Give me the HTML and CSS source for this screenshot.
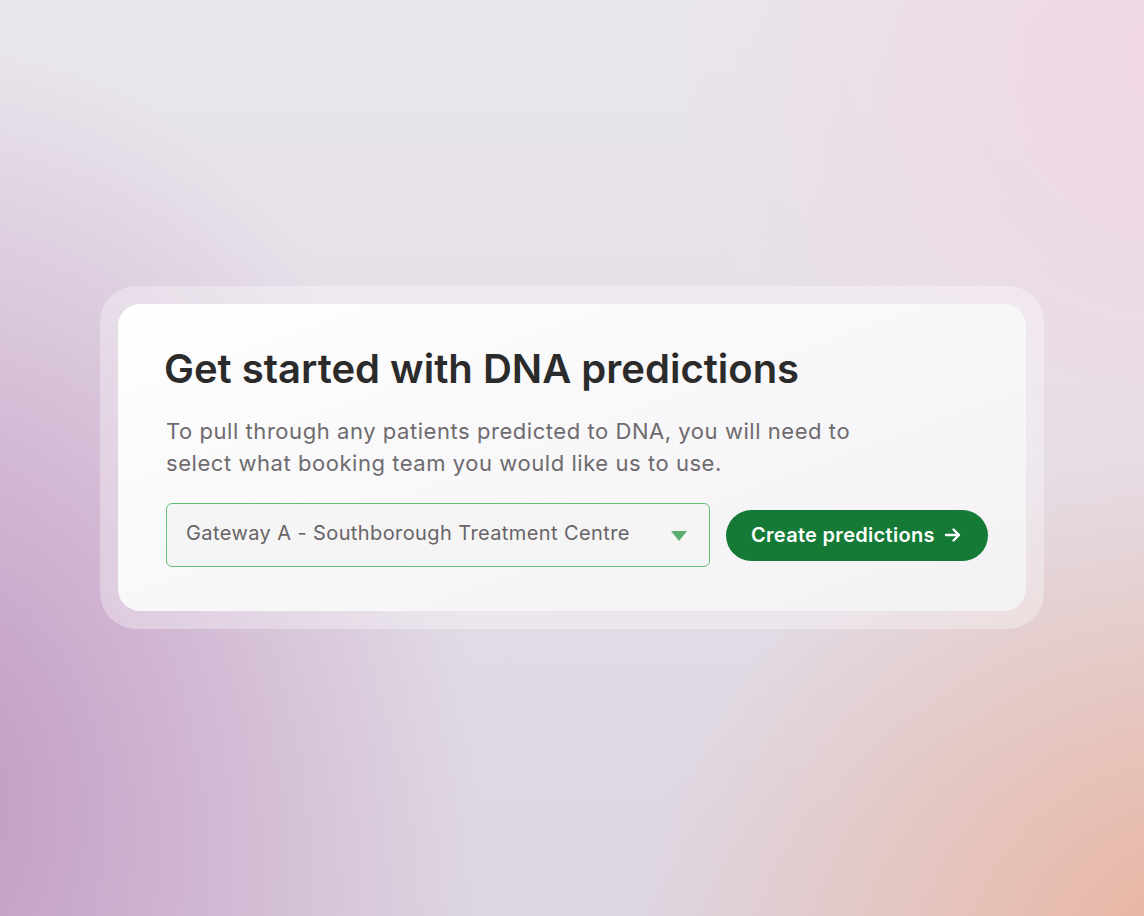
FILE: index.html
```html
<!DOCTYPE html>
<html lang="en">
<head>
<meta charset="utf-8">
<title>Get started with DNA predictions</title>
<link rel="stylesheet" href="styles.css">
</head>
<body>
<main class="stage">
  <div class="frame">
    <section class="card">
      <h1 class="title">Get started with DNA predictions</h1>
      <p class="lead">To pull through any patients predicted to DNA, you will need to select what booking team you would like us to use.</p>
      <div class="actions">
        <div class="select">
          <span class="select-value">Gateway A - Southborough Treatment Centre</span>
          <svg class="caret" width="16" height="11" viewBox="0 0 16 11" aria-hidden="true"><path d="M0 0 H16 L8 10 Z" fill="#5aae72"/></svg>
        </div>
        <button class="btn">Create predictions
          <svg class="arrow" width="18" height="16" viewBox="0 0 18 16" aria-hidden="true"><path d="M2 8 H15 M9.5 2.5 L15 8 L9.5 13.5" fill="none" stroke="#fff" stroke-width="2.4" stroke-linecap="round" stroke-linejoin="round"/></svg>
        </button>
      </div>
    </section>
  </div>
</main>
</body>
</html>
```

FILE: styles.css
```css
* { box-sizing: border-box; }
html, body { margin: 0; padding: 0; }
body {
  width: 1144px;
  height: 916px;
  overflow: hidden;
  font-family: Inter, "Liberation Sans", sans-serif;
}
.stage {
  width: 1144px;
  height: 916px;
  padding: 286px 100px 0 100px;
  background:
    radial-gradient(ellipse 560px 760px at -80px 800px, rgba(190,148,192,0.95) 0%, rgba(196,156,196,0.6) 45%, rgba(210,180,212,0) 100%),
    radial-gradient(ellipse 560px 520px at 1200px 960px, rgba(234,178,156,1) 0%, rgba(234,182,162,0.6) 45%, rgba(236,200,190,0) 100%),
    radial-gradient(ellipse 500px 500px at 1180px 60px, rgba(240,214,228,1) 0%, rgba(240,218,230,0) 100%),
    linear-gradient(180deg, #e9e6ec 0%, #e6e0e9 40%, #ddd5e1 100%);
}
.frame {
  width: 944px;
  padding: 18px;
  border-radius: 36px;
  background: rgba(255,255,255,0.32);
}
.card {
  border-radius: 22px;
  background: linear-gradient(160deg, #ffffff 0%, #f7f6f8 55%, #f4f1f4 100%);
  padding: 42px 30px 44px 46px;
}
.title {
  margin: 0;
  font-size: 40px;
  line-height: 46px;
  font-weight: 600;
  letter-spacing: 0;
  color: #2b2b2b;
}
.lead {
  margin: 23px 0 0 2px;
  width: 720px;
  font-size: 22px;
  line-height: 32px;
  color: #6e6b6e;
  letter-spacing: 0.55px;
}
.actions {
  margin-top: 24px;
  display: flex;
  align-items: center;
  gap: 16px;
  padding-left: 2px;
}
.select {
  flex: 0 0 544px;
  height: 64px;
  border: 1.5px solid #63c274;
  border-radius: 6px;
  display: flex;
  align-items: center;
  justify-content: space-between;
  padding: 0 22px 0 19px;
  background: #f6f5f6;
}
.select-value {
  font-size: 20px;
  color: #676467;
  letter-spacing: 0.4px;
  margin-top: -4px;
  white-space: nowrap;
}
.caret { margin-top: 2px; flex-shrink: 0; }
.btn {
  flex: 0 0 auto;
  white-space: nowrap;
  height: 51px;
  padding: 0 26px 0 25px;
  border: 0;
  border-radius: 26px;
  background: #147a36;
  color: #ffffff;
  font-family: Inter, "Liberation Sans", sans-serif;
  font-size: 20px;
  font-weight: 600;
  letter-spacing: 0.3px;
  display: flex;
  align-items: center;
  gap: 9px;
}
```
